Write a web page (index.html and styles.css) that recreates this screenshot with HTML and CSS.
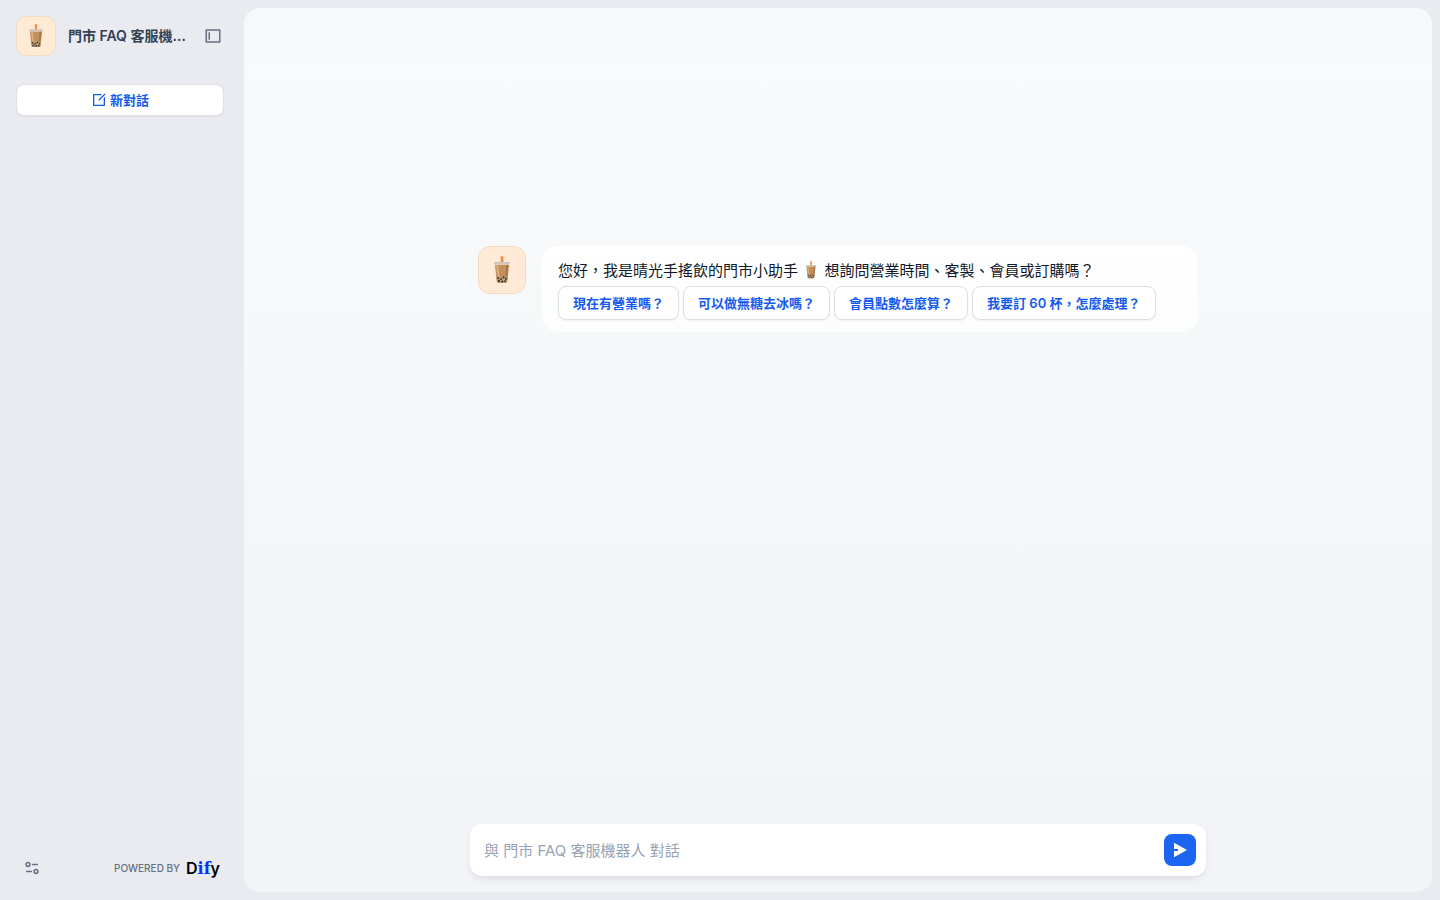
FILE: index.html
```html
<!DOCTYPE html>
<html lang="zh-Hant">
<head>
    <meta charset="UTF-8">
    <meta name="viewport" content="width=device-width, initial-scale=1.0">
    <title>門市 FAQ 客服機器人</title>
    <link rel="stylesheet" href="styles.css">
</head>
<body>
    <svg class="defs" aria-hidden="true">
        <symbol id="boba" viewBox="0 0 24 24">
            <path d="M10.8 0.2H13.1L13.3 6H11Z" fill="#f58a4b"/>
            <path d="M5.8 6H18.2L16.6 21.4Q16.4 23 14.8 23H9.2Q7.6 23 7.4 21.4Z" fill="#c3905d"/>
            <path d="M5.8 6H18.2L18 7.8H6Z" fill="#dccdb9"/>
            <path d="M7 7.8H9L9.8 18H8.2Z" fill="#d9ad7c"/>
            <path d="M15.6 7.8H17.5L16.5 18H14.8Z" fill="#a87546"/>
            <rect x="5.2" y="5.2" width="13.6" height="1.2" rx="0.6" fill="#c9c3bc"/>
            <path d="M7.2 17.6H16.8L16.4 21.4Q16.2 23 14.8 23H9.2Q7.8 23 7.6 21.4Z" fill="#bda27e"/>
            <g fill="#49352a">
                <circle cx="8.6" cy="18.8" r="0.9"/>
                <circle cx="11.2" cy="19.7" r="0.9"/>
                <circle cx="13.4" cy="18.3" r="0.9"/>
                <circle cx="15.5" cy="19.6" r="0.9"/>
                <circle cx="9.4" cy="21.4" r="1"/>
                <circle cx="12.3" cy="22" r="0.9"/>
                <circle cx="14.7" cy="21.7" r="0.9"/>
            </g>
        </symbol>
    </svg>

    <div class="app">
        <aside class="sidebar">
            <div class="sidebar-header">
                <span class="app-icon"><svg width="24" height="24"><use href="#boba"/></svg></span>
                <h1 class="app-name">門市 FAQ 客服機器人</h1>
                <button class="icon-button" type="button" aria-label="收合側欄">
                    <svg width="18" height="18" viewBox="0 0 24 24" fill="currentColor"><path d="M21 3C21.55 3 22 3.45 22 4V20C22 20.55 21.55 21 21 21H3C2.45 21 2 20.55 2 20V4C2 3.45 2.45 3 3 3H21ZM20 5H4V19H20V5ZM8 7V17H6V7H8Z"/></svg>
                </button>
            </div>
            <button class="new-chat" type="button">
                <svg width="16" height="16" viewBox="0 0 24 24" fill="currentColor"><path d="M16.76 3 14.76 5H5V19H19V9.24L21 7.24V20C21 20.55 20.55 21 20 21H4C3.45 21 3 20.55 3 20V4C3 3.45 3.45 3 4 3H16.76ZM20.49 2.1 21.9 3.51 12.7 12.7 11.3 12.7 11.3 11.29Z"/></svg>
                <span class="button-label">新對話</span>
            </button>
            <div class="sidebar-footer">
                <button class="icon-button" type="button" aria-label="設定">
                    <svg width="18" height="18" viewBox="0 0 18 18" fill="none" stroke="currentColor" stroke-width="1.5"><circle cx="5" cy="5.5" r="1.9"/><path d="M9 5.5H15M3 12.5H9"/><circle cx="13" cy="12.5" r="1.9"/></svg>
                </button>
                <div class="powered">
                    <span class="powered-text">POWERED BY</span>
                    <span class="logo">D<span class="logo-if">if</span>y</span>
                </div>
            </div>
        </aside>

        <main class="chat">
            <div class="chat-header"></div>
            <div class="welcome">
                <div class="message">
                    <span class="app-icon app-icon-large"><svg width="28" height="28"><use href="#boba"/></svg></span>
                    <div class="bubble">
                        <p class="greeting">您好，我是晴光手搖飲的門市小助手 <svg class="emoji" width="18" height="18"><use href="#boba"/></svg> 想詢問營業時間、客製、會員或訂購嗎？</p>
                        <div class="suggestions">
                            <button class="suggestion" type="button">現在有營業嗎？</button>
                            <button class="suggestion" type="button">可以做無糖去冰嗎？</button>
                            <button class="suggestion" type="button">會員點數怎麼算？</button>
                            <button class="suggestion" type="button">我要訂 60 杯，怎麼處理？</button>
                        </div>
                    </div>
                </div>
            </div>
            <form class="composer">
                <input class="composer-input" type="text" aria-label="訊息" placeholder="與 門市 FAQ 客服機器人 對話">
                <button class="send" type="button" aria-label="送出">
                    <svg width="16" height="16" viewBox="0 0 16 16"><path d="M2 0.8 15 8 2 15.2V9H6V7H2Z" fill="#fff"/></svg>
                </button>
            </form>
        </main>
    </div>
</body>
</html>
```
FILE: styles.css
```css
* {
    box-sizing: border-box;
}

body {
    margin: 0;
    font-family: Inter, "Noto Sans CJK TC", sans-serif;
    color: #101828;
    background-color: #e9ebf0;
}

button,
input {
    font-family: inherit;
}

button {
    cursor: pointer;
}

.defs {
    position: absolute;
    width: 0;
    height: 0;
}

.app {
    display: flex;
    min-height: 100vh;
}

/* Sidebar */
.sidebar {
    display: flex;
    flex-direction: column;
    flex: none;
    width: 244px;
    padding: 16px 20px 16px 16px;
}

.sidebar-header {
    display: flex;
    align-items: center;
    margin-bottom: 28px;
}

.app-icon {
    display: flex;
    align-items: center;
    justify-content: center;
    flex: none;
    width: 40px;
    height: 40px;
    border: 1px solid #f3dcc5;
    border-radius: 10px;
    background-color: #ffead5;
}

.app-icon-large {
    width: 48px;
    height: 48px;
    border-radius: 12px;
}

.app-name {
    flex: 1;
    min-width: 0;
    margin: 0 4px 0 12px;
    overflow: hidden;
    font-size: 14px;
    font-weight: 600;
    line-height: 20px;
    color: #354052;
    white-space: nowrap;
    text-overflow: ellipsis;
}

.icon-button {
    display: flex;
    align-items: center;
    justify-content: center;
    flex: none;
    width: 32px;
    height: 32px;
    margin-right: -5px;
    padding: 0;
    border: 0;
    border-radius: 8px;
    color: #676f83;
    background: none;
}

.new-chat {
    display: flex;
    align-items: center;
    justify-content: center;
    gap: 3px;
    height: 32px;
    padding: 0 14px;
    border: 1px solid #dcdfe5;
    border-radius: 8px;
    font-size: 13px;
    font-weight: 600;
    color: #155aef;
    background-color: #fff;
    box-shadow: 0 1px 2px rgba(16, 24, 40, 0.06);
}

.button-label {
    padding-bottom: 2px;
}

.sidebar-footer {
    display: flex;
    align-items: center;
    justify-content: space-between;
    margin-top: auto;
}

.powered {
    display: flex;
    align-items: center;
    gap: 6px;
    padding-right: 4px;
}

.powered-text {
    font-size: 10px;
    font-weight: 500;
    line-height: 12px;
    color: #676f83;
}

.logo {
    font-size: 16px;
    font-weight: 600;
    line-height: 20px;
    color: #000;
}

.logo-if {
    font-family: "DejaVu Serif", serif;
    font-weight: 700;
    color: #0033ff;
}

/* Chat panel */
.chat {
    display: flex;
    flex-direction: column;
    align-items: center;
    flex: 1;
    min-width: 0;
    margin: 8px 8px 8px 0;
    padding-bottom: 16px;
    border-radius: 16px;
    background: linear-gradient(180deg, #f9fafb 0%, #f2f4f7 90%);
}

.chat-header {
    width: 100%;
    height: 56px;
    border-radius: 16px 16px 0 0;
    background-color: rgba(242, 244, 247, 0.3);
}

.welcome {
    display: flex;
    align-items: center;
    width: 100%;
    max-width: 720px;
    height: 50vh;
}

.message {
    display: flex;
    gap: 16px;
    width: 100%;
}

.bubble {
    flex: 1;
    min-width: 0;
    padding: 13px 16px 12px;
    border-radius: 16px;
    background: linear-gradient(180deg, #fff 0%, #fcfdfd 100%);
}

.greeting {
    margin: 0 0 3px;
    font-size: 15px;
    line-height: 24px;
}

.emoji {
    vertical-align: -3px;
}

.suggestions {
    display: flex;
    flex-wrap: wrap;
    gap: 4px;
}

.suggestion {
    height: 34px;
    padding: 0 14px 2px;
    border: 1px solid #dcdfe5;
    border-radius: 8px;
    font-size: 13px;
    font-weight: 600;
    color: #155aef;
    background-color: #fff;
    box-shadow: 0 1px 2px rgba(16, 24, 40, 0.06);
}

.composer {
    display: flex;
    align-items: center;
    width: 100%;
    max-width: 736px;
    height: 52px;
    margin-top: auto;
    padding: 0 10px 0 14px;
    border-radius: 12px;
    background-color: #fff;
    box-shadow: 0 4px 8px -2px rgba(16, 24, 40, 0.1), 0 2px 4px -2px rgba(16, 24, 40, 0.06);
}

.composer-input {
    flex: 1;
    min-width: 0;
    height: 32px;
    padding: 0;
    border: 0;
    outline: none;
    font-size: 15px;
    color: #101828;
    background: none;
}

.composer-input::placeholder {
    color: #98a2b3;
    opacity: 1;
}

.send {
    display: flex;
    align-items: center;
    justify-content: center;
    width: 32px;
    height: 32px;
    padding: 0;
    border: 0;
    border-radius: 8px;
    background-color: #1c64f2;
}
```
